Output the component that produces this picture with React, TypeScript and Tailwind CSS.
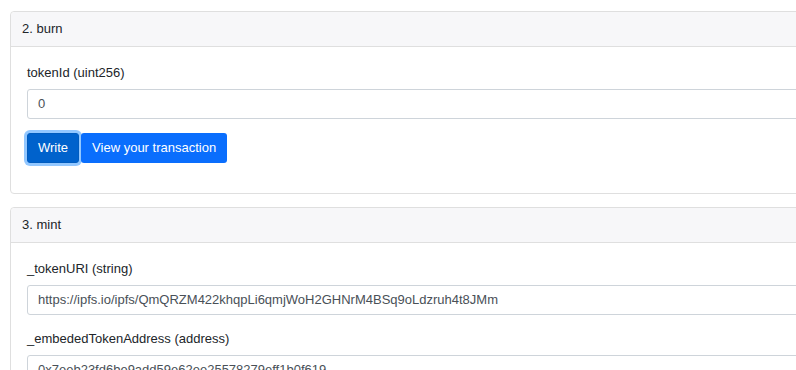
import React from 'react';

const Field: React.FC<{ label: string; value: string; last?: boolean }> = ({ label, value, last }) => (
  <div className={last ? '' : 'mb-[14px]'}>
    <label className="block text-[13px] leading-5 text-[#212529] mb-[6px]">{label}</label>
    <div className="h-[30px] border border-[#ced4da] rounded-[3px] px-[10px] flex items-center text-[13px] text-[#495057] bg-white whitespace-nowrap overflow-hidden">
      {value}
    </div>
  </div>
);

const Card: React.FC<{ title: string; children: React.ReactNode }> = ({ title, children }) => (
  <div className="border border-[#dfdfdf] rounded-[4px] bg-white">
    <div className="h-[35px] px-[11px] flex items-center bg-[#f7f7f9] border-b border-[#dfdfdf] text-[13px] text-[#212529] rounded-t-[4px]">
      {title}
    </div>
    <div className="pt-4 pb-[30px] pl-4 pr-4">{children}</div>
  </div>
);

export default function App() {
  return (
    <div className="w-[796px] h-[370px] overflow-hidden bg-white" style={{ fontFamily: '"Liberation Sans", Arial, sans-serif' }}>
      <div className="w-[820px] pl-[10px] pt-[11px] flex flex-col gap-[13px]">
        <Card title="2. burn">
          <Field label="tokenId (uint256)" value="0" />
          <div className="flex items-center gap-[2px]">
            <button className="h-[30px] px-[10px] rounded-[3px] bg-[#0062cc] border border-[#005cbf] text-white text-[13px] shadow-[0_0_0_3px_rgba(38,143,255,0.5)]">
              Write
            </button>
            <button className="h-[30px] px-[11px] rounded-[3px] bg-[#0a6efd] text-white text-[13px]">
              View your transaction
            </button>
          </div>
        </Card>
        <Card title="3. mint">
          <Field label="_tokenURI (string)" value="https://ipfs.io/ipfs/QmQRZM422khqpLi6qmjWoH2GHNrM4BSq9oLdzruh4t8JMm" />
          <Field label="_embededTokenAddress (address)" value="0x7eeb23fd6be9add59e62ee25578279eff1b0f619" last />
        </Card>
      </div>
    </div>
  );
}
